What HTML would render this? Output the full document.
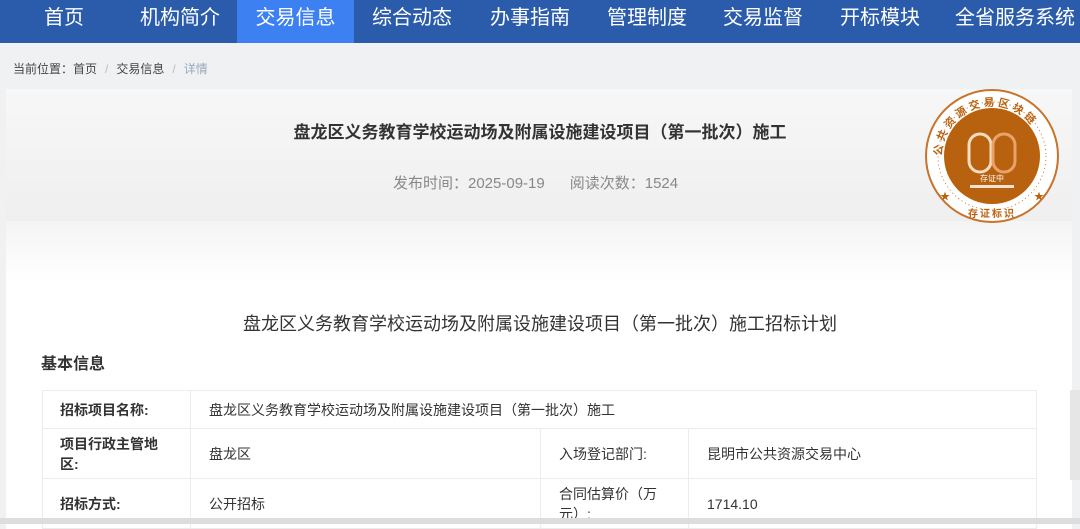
<!DOCTYPE html>
<html><head><meta charset="utf-8"><style>
*{margin:0;padding:0;box-sizing:border-box}
body{width:1080px;height:524px;overflow:hidden;background:#f0f1f3;font-family:"Liberation Sans","Noto Sans CJK SC",sans-serif;position:relative}
.nav{position:absolute;left:0;top:0;width:1080px;height:43px;background:#2b5cac}
.nav span{position:absolute;top:0;height:43px;line-height:36px;color:#fff;font-size:20px;text-align:center}
.nav .act{background:#3d80f2}
.bc{position:absolute;left:13px;top:60px;font-size:12px;color:#444}
.bc i{font-style:normal;color:#bbb;margin:0 8px}
.bc em{font-style:normal;color:#9aa8bd}
.card{position:absolute;left:6px;top:89px;width:1066px;height:440px;background:#fff}
.head{position:absolute;left:0;top:0;width:1066px;height:132px;background:linear-gradient(#f7f7f7,#efefef)}
.fade{position:absolute;left:0;top:132px;width:1066px;height:60px;background:linear-gradient(#f4f4f4,#fff)}
.t1{position:absolute;left:0;width:1080px;top:118px;text-align:center;font-size:17px;font-weight:bold;color:#333}
.meta{position:absolute;left:393px;top:172px;font-size:15px;color:#888}
.t2{position:absolute;left:0;width:1080px;top:310px;text-align:center;font-size:18px;color:#333}
.sec{position:absolute;left:41px;top:350px;font-size:16px;font-weight:bold;color:#333}
table{position:absolute;left:42px;top:390px;width:995px;border-collapse:collapse;font-size:14px;color:#333}
td{border:1px solid #ececec;padding:0 18px;vertical-align:middle}
td.l{font-weight:bold;padding-left:17px}
.rgray{position:absolute;right:0;top:390px;width:10px;height:90px;background:#e6e6e6}
.bot{position:absolute;left:0;top:518px;width:1080px;height:6px;background:#ddd}
</style></head><body>
<div class="nav">
<span style="left:28px;width:72px">首页</span>
<span style="left:125px;width:110px">机构简介</span>
<span class="act" style="left:237px;width:117px">交易信息</span>
<span style="left:357px;width:110px">综合动态</span>
<span style="left:475px;width:110px">办事指南</span>
<span style="left:592px;width:110px">管理制度</span>
<span style="left:708px;width:110px">交易监督</span>
<span style="left:825px;width:110px">开标模块</span>
<span style="left:950px;width:130px">全省服务系统</span>
</div>
<div class="bc">当前位置：首页<i>/</i>交易信息<i>/</i><em>详情</em></div>
<div class="card"><div class="head"></div><div class="fade"></div></div>
<div class="t1">盘龙区义务教育学校运动场及附属设施建设项目（第一批次）施工</div>
<div class="meta">发布时间：2025-09-19&nbsp;&nbsp;&nbsp;&nbsp;&nbsp;&nbsp;阅读次数：1524</div>
<svg style="position:absolute;left:924px;top:88px" width="136" height="136" viewBox="0 0 136 136">
<defs><path id="arc" d="M18 68 A50 50 0 0 1 118 68"/></defs>
<circle cx="68" cy="68" r="66" fill="#fff" stroke="#c8732a" stroke-width="2"/>
<circle cx="68" cy="68" r="48" fill="#b8620f"/>
<circle cx="68" cy="68" r="54" fill="none" stroke="#c8732a" stroke-width="1" stroke-dasharray="1 3"/>
<rect x="45" y="46" width="22" height="38" rx="11" fill="none" stroke="#f6dcc3" stroke-width="3"/>
<rect x="69" y="46" width="22" height="38" rx="11" fill="none" stroke="#e9a36a" stroke-width="3"/>
<text x="68" y="93" font-size="8" fill="#fff" text-anchor="middle" font-family="Noto Sans CJK SC">存证中</text>
<rect x="46" y="97" width="44" height="3" fill="#f3e3d3"/>
<text font-size="11" fill="#b8620f" font-weight="bold" font-family="Noto Sans CJK SC" letter-spacing="3"><textPath href="#arc">公共资源交易区块链</textPath></text>
<text x="68" y="129" font-size="10" fill="#b8620f" text-anchor="middle" font-weight="bold" font-family="Noto Sans CJK SC" letter-spacing="2">存证标识</text>
<text x="16" y="112" font-size="10" fill="#b8620f">★</text><text x="110" y="112" font-size="10" fill="#b8620f">★</text>
</svg>
<div class="t2">盘龙区义务教育学校运动场及附属设施建设项目（第一批次）施工招标计划</div>
<div class="sec">基本信息</div>
<table>
<tr style="height:38px"><td class="l" style="width:148px">招标项目名称:</td><td colspan="3">盘龙区义务教育学校运动场及附属设施建设项目（第一批次）施工</td></tr>
<tr style="height:50px"><td class="l">项目行政主管地区:</td><td style="width:350px">盘龙区</td><td style="width:148px">入场登记部门:</td><td>昆明市公共资源交易中心</td></tr>
<tr style="height:50px"><td class="l">招标方式:</td><td>公开招标</td><td>合同估算价（万元）:</td><td>1714.10</td></tr>
</table>
<div class="rgray"></div>
<div class="bot"></div>
</body></html>
